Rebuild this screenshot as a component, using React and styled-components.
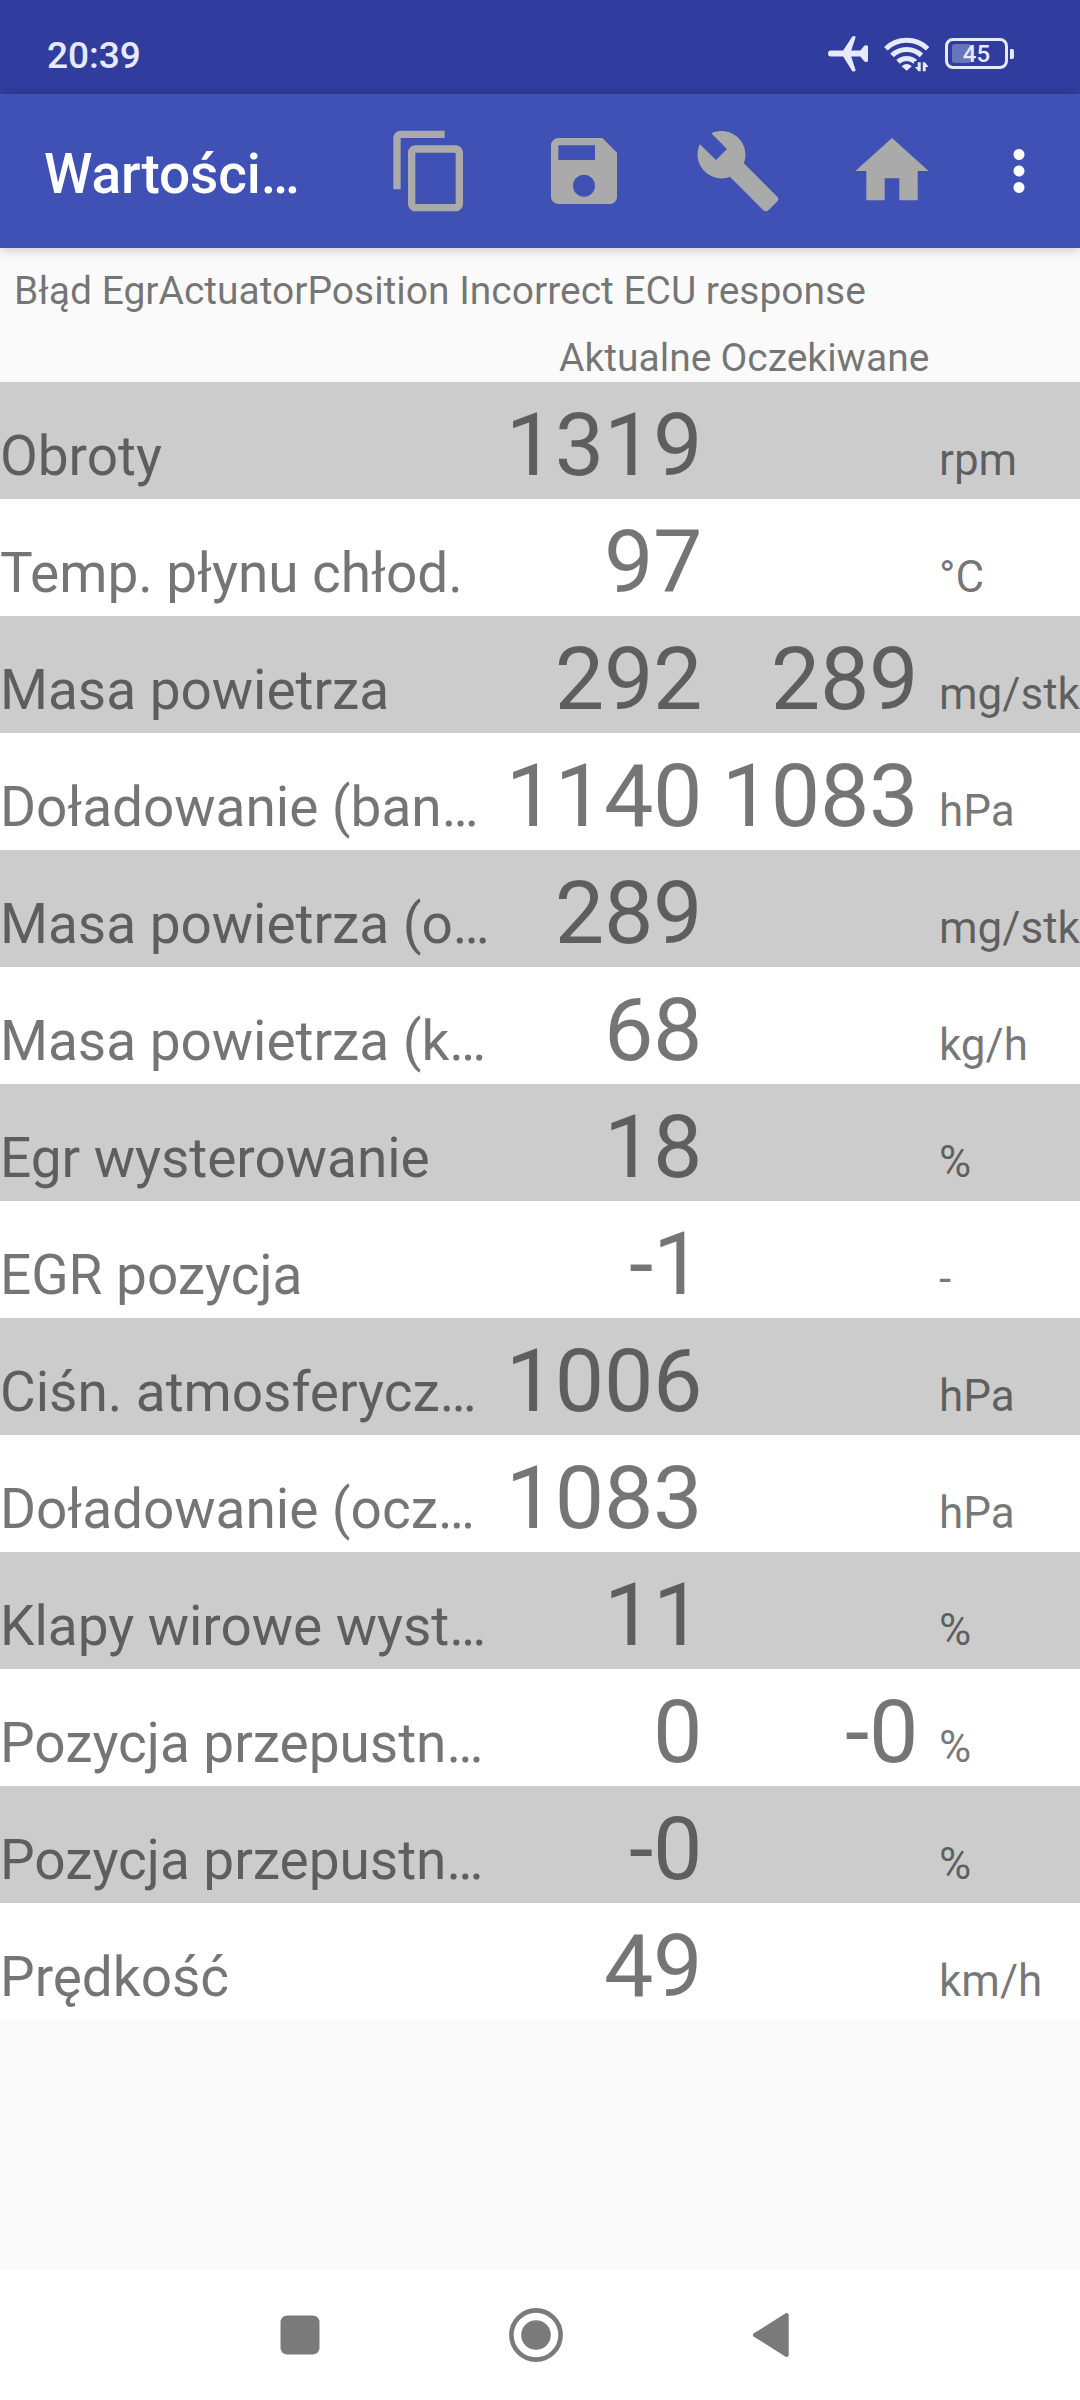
import React from 'react';
import styled, { createGlobalStyle } from 'styled-components';
import { MdContentCopy, MdSave, MdMoreVert } from 'react-icons/md';

const rows = [
  { name: 'Obroty', actual: '1319', unit: 'rpm' },
  { name: 'Temp. płynu chłod.', actual: '97', unit: '°C' },
  { name: 'Masa powietrza', actual: '292', expected: '289', unit: 'mg/stk' },
  { name: 'Doładowanie (ban…', actual: '1140', expected: '1083', unit: 'hPa' },
  { name: 'Masa powietrza (o…', actual: '289', unit: 'mg/stk' },
  { name: 'Masa powietrza (k…', actual: '68', unit: 'kg/h' },
  { name: 'Egr wysterowanie', actual: '18', unit: '%' },
  { name: 'EGR pozycja', actual: '-1', unit: '-' },
  { name: 'Ciśn. atmosferycz…', actual: '1006', unit: 'hPa' },
  { name: 'Doładowanie (ocz…', actual: '1083', unit: 'hPa' },
  { name: 'Klapy wirowe wyst…', actual: '11', unit: '%' },
  { name: 'Pozycja przepustn…', actual: '0', expected: '-0', unit: '%' },
  { name: 'Pozycja przepustn…', actual: '-0', unit: '%' },
  { name: 'Prędkość', actual: '49', unit: 'km/h' },
];

function AirplaneIcon() {
  return (
    <svg width="41" height="36" viewBox="0 0 41 36" fill="currentColor">
      <path d="M3 14.6h12.2L23.8 1.2Q24.6 0 26 0q2 0 1.5 1.8L23.2 14.6h9.2l3.6-4.5q.7-.9 2.1-.9 1.9 0 1.9 1.3V24.7q0 1.3-1.9 1.3-1.4 0-2.1-.9l-3.6-4.5H23.2L27.5 33.8q.5 1.8-1.5 1.8-1.4 0-2.2-1.2L15.2 20.6H3a3 3 0 0 1 0-6z" />
    </svg>
  );
}

function WifiIcon() {
  return (
    <svg width="46" height="36" viewBox="0 0 46 36" fill="none" stroke="currentColor" strokeWidth="5">
      <path d="M1.8 12.8a30 30 0 0 1 41.8 0" />
      <path d="M8 19.4a21.2 21.2 0 0 1 29.4 0" />
      <path d="M14 25.8a12.8 12.8 0 0 1 17.4 0" />
      <path d="M17.6 30.2q5.1-4.4 10.2 0L22.7 34.8z" fill="currentColor" stroke="none" />
      <path d="M30 25.5h16V36H30z" fill="#303d9e" stroke="none" />
      <path d="M33.7 26.3h3v9h-2.2L30.9 31h2.8zM38.8 35.3h2.9V31h2.9l-3.7-4.7h-2.1z" fill="currentColor" stroke="none" />
    </svg>
  );
}

function WrenchIcon() {
  return (
    <svg width="88" height="88" viewBox="0 0 24 24" fill="currentColor">
      <path d="M22.7 19l-9.1-9.1c.9-2.3.4-5-1.5-6.9-2-2-5-2.4-7.4-1.3L9 6 6 9 1.6 4.7C.4 7.1.9 10.1 2.9 12.1c1.9 1.9 4.6 2.4 6.9 1.5l9.1 9.1c.4.4 1 .4 1.4 0l2.3-2.3c.5-.4.5-1.1.1-1.4z" />
    </svg>
  );
}

function HomeIcon() {
  return (
    <svg width="88" height="88" viewBox="0 0 24 24" fill="currentColor">
      <path d="M10 20v-6h4v6h5v-8h3L12 3 2 12h3v8z" />
    </svg>
  );
}

function ValueRow({ name, actual, expected, unit, shaded }) {
  return (
    <Row $shaded={shaded}>
      <RowName>{name}</RowName>
      <RowValue>{actual}</RowValue>
      <RowValue>{expected}</RowValue>
      <RowUnit>{unit}</RowUnit>
    </Row>
  );
}

function App() {
  return (
    <Screen>
      <GlobalStyle />
      <StatusBar>
        <Clock>20:39</Clock>
        <StatusIcons>
          <AirplaneIcon />
          <WifiIcon />
          <Battery>
            <BatteryBody>
              <BatteryLevel />
              <BatteryText>45</BatteryText>
            </BatteryBody>
            <BatteryTip />
          </Battery>
        </StatusIcons>
      </StatusBar>
      <Toolbar>
        <Title>Wartości…</Title>
        <Action aria-label="Kopiuj">
          <MdContentCopy size={88} />
        </Action>
        <Action aria-label="Zapisz">
          <MdSave size={88} />
        </Action>
        <Action aria-label="Ustawienia">
          <WrenchIcon />
        </Action>
        <Action aria-label="Start">
          <HomeIcon />
        </Action>
        <Overflow aria-label="Więcej">
          <MdMoreVert size={66} />
        </Overflow>
      </Toolbar>
      <Content>
        <ErrorText>Błąd EgrActuatorPosition Incorrect ECU response</ErrorText>
        <Headings>
          <span>Aktualne</span>
          <span>Oczekiwane</span>
        </Headings>
        {rows.map((row, i) => (
          <ValueRow key={i} {...row} shaded={i % 2 === 0} />
        ))}
      </Content>
      <NavBar>
        <svg width="40" height="40" viewBox="0 0 40 40">
          <rect x=".5" y=".5" width="39" height="39" rx="6.5" fill="#7a7a7a" />
        </svg>
        <svg width="54" height="54" viewBox="0 0 54 54">
          <circle cx="27" cy="27" r="24.6" fill="none" stroke="#7a7a7a" strokeWidth="4.6" />
          <circle cx="27" cy="27" r="14.8" fill="#7a7a7a" />
        </svg>
        <svg width="38" height="46" viewBox="0 0 38 46">
          <path d="M3 23L34.7 3v40z" fill="#7a7a7a" stroke="#7a7a7a" strokeWidth="4" strokeLinejoin="round" />
        </svg>
      </NavBar>
    </Screen>
  );
}

const GlobalStyle = createGlobalStyle`
  body {
    margin: 0;
    background: #fafafa;
    font-family: Roboto, sans-serif;
  }
`;

const Screen = styled.div`
  display: flex;
  flex-direction: column;
  width: 1080px;
  height: 2400px;
  overflow: hidden;
  background: #fafafa;
`;

const StatusBar = styled.header`
  display: flex;
  justify-content: space-between;
  box-sizing: border-box;
  height: 94px;
  padding: 33px 66px 0 47px;
  background: #303d9e;
  color: #e6eafc;
`;

const Clock = styled.div`
  padding-top: 1px;
  font-size: 37px;
  font-weight: 500;
  line-height: 44px;
`;

const StatusIcons = styled.div`
  display: flex;
  align-items: flex-start;
  gap: 15px;
  padding-top: 3px;
`;

const Battery = styled.div`
  display: flex;
  align-items: center;
  gap: 2px;
  padding-top: 2px;
`;

const BatteryBody = styled.div`
  position: relative;
  display: flex;
  justify-content: center;
  box-sizing: border-box;
  width: 63px;
  height: 31px;
  border: 3px solid currentColor;
  border-radius: 8px;
`;

const BatteryLevel = styled.div`
  position: absolute;
  top: 3px;
  bottom: 3px;
  left: 4px;
  width: 19px;
  border-radius: 3px;
  background: #6a74bd;
`;

const BatteryText = styled.span`
  position: relative;
  font-size: 24px;
  font-weight: 500;
  line-height: 26px;
`;

const BatteryTip = styled.div`
  width: 4px;
  height: 10px;
  border-radius: 0 2px 2px 0;
  background: currentColor;
`;

const Toolbar = styled.div`
  display: flex;
  align-items: center;
  height: 154px;
  flex-shrink: 0;
  background: #3f51b5;
  box-shadow: 0 2px 12px rgba(0, 0, 0, 0.2);
`;

const Title = styled.h1`
  box-sizing: border-box;
  width: 352.7px;
  margin: 0;
  padding: 6px 0 0 44px;
  color: #fff;
  font-size: 55px;
  font-weight: 500;
  letter-spacing: -0.15px;
`;

const Action = styled.button`
  display: flex;
  justify-content: center;
  align-items: center;
  width: 154.2px;
  height: 154px;
  padding: 0;
  border: none;
  background: none;
  color: #aaa;
`;

const Overflow = styled(Action)`
  width: 99px;
  color: #fff;
`;

const Content = styled.main`
  flex: 1;
  color: rgba(0, 0, 0, 0.54);
`;

const ErrorText = styled.p`
  height: 67px;
  margin: 0;
  padding: 18px 14px 0;
  box-sizing: border-box;
  font-size: 39px;
  line-height: 51px;
  letter-spacing: -0.02px;
  white-space: nowrap;
`;

const Headings = styled.div`
  display: flex;
  gap: 9px;
  height: 67px;
  box-sizing: border-box;
  padding: 18px 0 0 559px;
  font-size: 39px;
  line-height: 51px;
`;

const Row = styled.div`
  display: grid;
  grid-template-columns: 502px 200px 216px 1fr;
  align-items: baseline;
  box-sizing: border-box;
  height: 117px;
  padding-top: 11px;
  background: ${(props) => (props.$shaded ? '#ccc' : '#fff')};
  white-space: nowrap;
`;

const RowName = styled.div`
  font-size: 55px;
  letter-spacing: -0.05px;
`;

const RowValue = styled.div`
  font-size: 88px;
  letter-spacing: -0.4px;
  text-align: right;
`;

const RowUnit = styled.div`
  padding-left: 21px;
  font-size: 44px;
`;

const NavBar = styled.nav`
  display: flex;
  align-items: center;
  height: 130px;
  padding-left: 280px;
  background: #fff;

  svg:nth-child(2) {
    margin: 0 189px;
  }
`;

export default App;
